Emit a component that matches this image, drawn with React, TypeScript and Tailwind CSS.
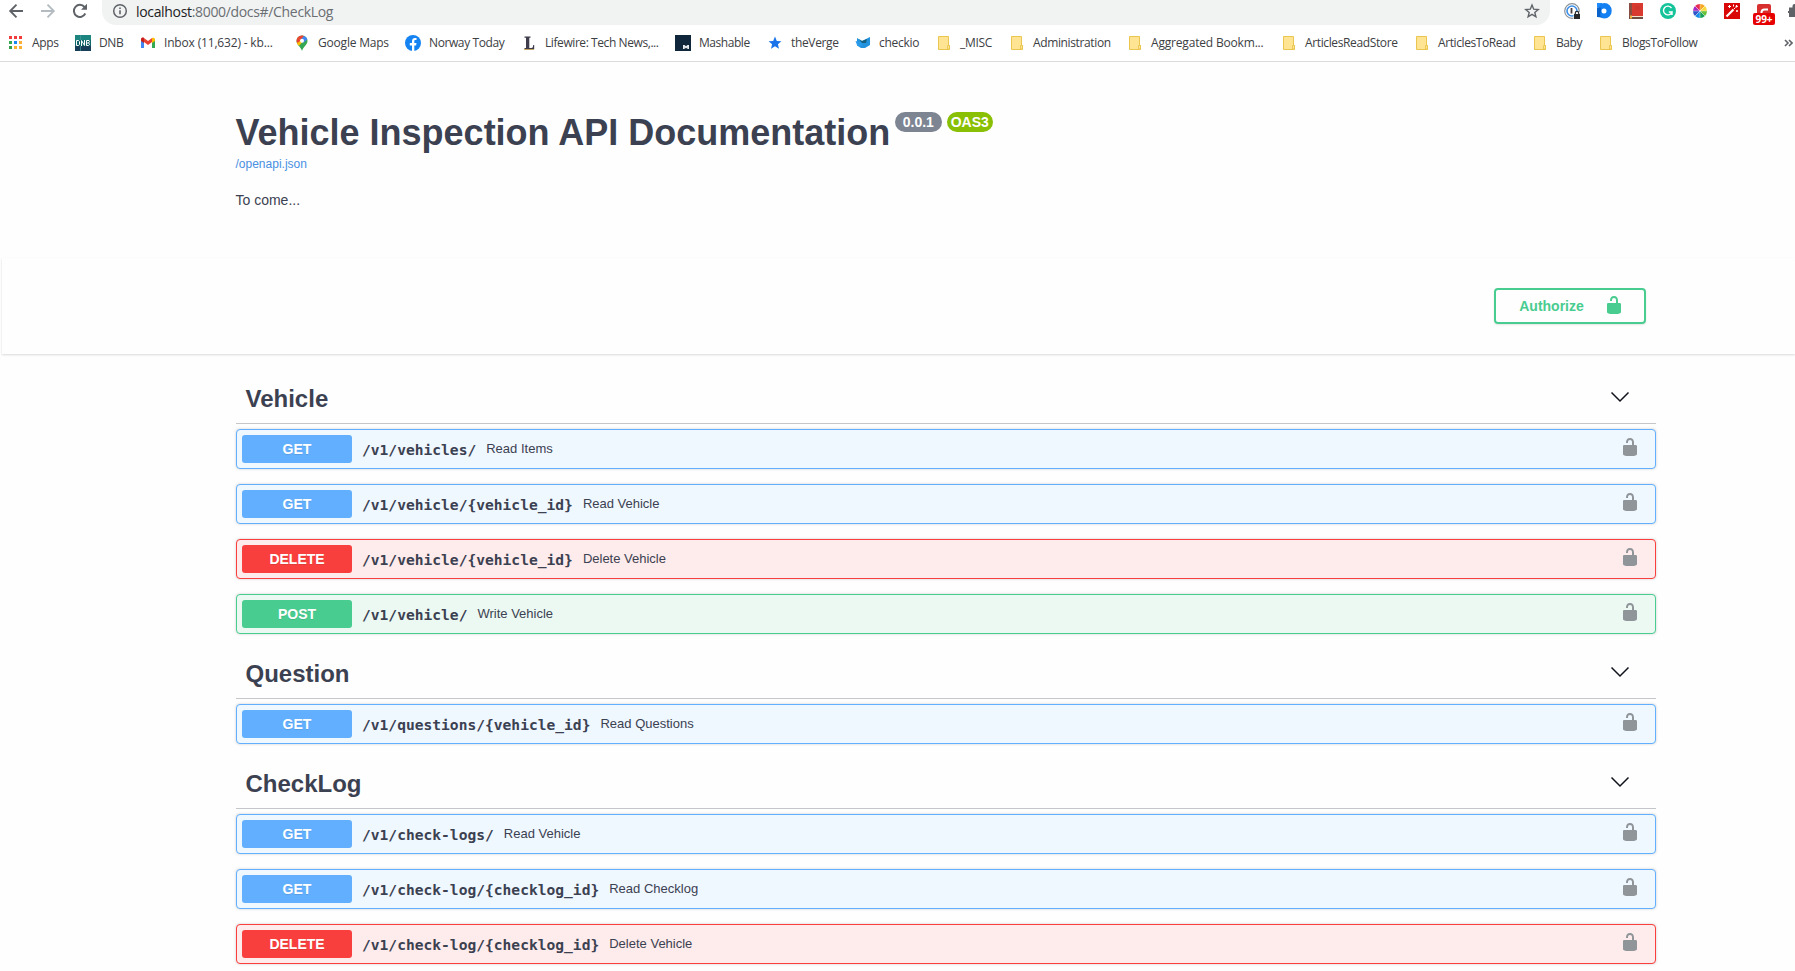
import React from "react";

type Method = "GET" | "DELETE" | "POST";
type Operation = { method: Method; path: string; summary: string };

const styles: Record<Method, { box: string; tag: string }> = {
  GET: { box: "border-[#61affe] bg-[#eff7ff]", tag: "bg-[#61affe]" },
  DELETE: { box: "border-[#f93e3e] bg-[#feebeb]", tag: "bg-[#f93e3e]" },
  POST: { box: "border-[#49cc90] bg-[#ecf9f3]", tag: "bg-[#49cc90]" },
};

const sections: { name: string; ops: Operation[] }[] = [
  {
    name: "Vehicle",
    ops: [
      { method: "GET", path: "/v1/vehicles/", summary: "Read Items" },
      { method: "GET", path: "/v1/vehicle/{vehicle_id}", summary: "Read Vehicle" },
      { method: "DELETE", path: "/v1/vehicle/{vehicle_id}", summary: "Delete Vehicle" },
      { method: "POST", path: "/v1/vehicle/", summary: "Write Vehicle" },
    ],
  },
  {
    name: "Question",
    ops: [{ method: "GET", path: "/v1/questions/{vehicle_id}", summary: "Read Questions" }],
  },
  {
    name: "CheckLog",
    ops: [
      { method: "GET", path: "/v1/check-logs/", summary: "Read Vehicle" },
      { method: "GET", path: "/v1/check-log/{checklog_id}", summary: "Read Checklog" },
      { method: "DELETE", path: "/v1/check-log/{checklog_id}", summary: "Delete Vehicle" },
    ],
  },
];

function Unlock({ className }: { className: string }) {
  return (
    <svg viewBox="0 0 20 20" width="20" height="20" className={className} fill="currentColor">
      <path d="M15.8 8H14V5.6C14 2.703 12.665 1 10 1 7.334 1 6 2.703 6 5.6V6h2v-.801C8 3.754 8.797 3 10 3c1.203 0 2 .754 2 2.199V8H4c-.553 0-1 .646-1 1.199V17c0 .549.428 1.139.951 1.307l1.197.387C5.672 18.861 6.55 19 7.1 19h5.8c.549 0 1.428-.139 1.951-.307l1.196-.387c.524-.167.953-.757.953-1.306V9.199C17 8.646 16.352 8 15.8 8z" />
    </svg>
  );
}

function Chevron() {
  return (
    <svg viewBox="0 0 20 20" width="20" height="20" className="mb-[3px]" fill="none" stroke="#11131c" strokeWidth="1.5">
      <path d="M1.500 5.500 10 14l8.500-8.500" />
    </svg>
  );
}

function AppsIcon() {
  const colors = ["#f23c3c", "#f23c3c", "#f23c3c", "#34a853", "#1a86f3", "#fbb034", "#34a04f", "#fbb034", "#fbb034"];
  return (
    <svg width="16" height="16">
      {colors.map((c, i) => (
        <rect key={i} x={2 + (i % 3) * 5} y={1 + Math.floor(i / 3) * 5} width="3" height="3" fill={c} />
      ))}
    </svg>
  );
}

function DnbIcon() {
  return (
    <svg width="16" height="16">
      <rect width="16" height="16" fill="#14656a" />
      <rect width="16" height="5" fill="#1c8580" />
      <rect y="11" width="16" height="5" fill="#183f57" />
      <path d="M5.500 0v5M5.500 11v5" stroke="#4a9a9c" strokeWidth=".7" />
      <g fill="none" stroke="#fff" strokeWidth="1">
        <path d="M1.500 5.500h2l1 1v3l-1 1h-2zM6.500 11V5.500l3 5V5M11.500 5.500H14l.5 1L13.500 8l1 1v.5l-1 1h-2zM11.500 8h2" />
      </g>
    </svg>
  );
}

function GmailIcon() {
  return (
    <svg width="16" height="16">
      <path d="M1 4v9h3V7z" fill="#4285f4" />
      <path d="M15 4v9h-3V7z" fill="#34a853" />
      <path d="M1 4.500c0-2 2-2.200 3-1.500l4 3 4-3v4l-4 3-4-3-3-2z" fill="#ea4335" />
      <path d="M12 3c1-.7 3-.5 3 1.500V6l-3 2z" fill="#fbbc04" />
      <path d="M1 4.500C1 3 2.500 2 4 3v5L1 6z" fill="#c5221f" />
    </svg>
  );
}

function MapsIcon() {
  return (
    <svg width="16" height="16">
      <path d="M8 .5A5.500 5.500 0 0 0 2.500 6c0 4 4 5 5.500 10 1.500-5 5.500-6 5.500-10A5.500 5.500 0 0 0 8 .5z" fill="#34a853" />
      <path d="M3.800 2.500 8 6l-3.500 4.500C3 8.500 2 5.500 3.800 2.500z" fill="#fbbc04" />
      <path d="M3.700 2.600 6.500 5 10 .9C7 0 5 1 3.700 2.600z" fill="#ea4335" />
      <path d="M10 .9 5 7 3 8C2 5 3 3.500 3.700 2.600L6.200 4.700z" fill="#ea4335" />
      <path d="M10 .9C12 1.700 13 3 13.300 4.500L9 8 6.500 5z" fill="#4285f4" />
      <path d="M3 8c.5 1 1.300 2 2 2.800L9.500 6z" fill="#fbbc04" />
      <circle cx="8" cy="5.800" r="2" fill="#fff" />
    </svg>
  );
}

function FacebookIcon() {
  return (
    <svg width="16" height="16">
      <circle cx="8" cy="8" r="8" fill="#1683f3" />
      <path d="M7 16v-5.500H4.800V8H7V6.200C7 4 8.300 3 10 3l1.500.1v2h-1c-1 0-1.200.5-1.200 1.200V8h2.200l-.4 2.500H9.300V16z" fill="#fff" />
    </svg>
  );
}

function LifewireIcon() {
  return (
    <svg width="16" height="16">
      <path d="M3 14h10v1H3z" fill="#f0c96a" />
      <path d="M3.500 1.500h6v1.200H8.300V13h2.200c1.300 0 1.500-1 1.700-3h1v4.300H3.500V13H5V2.700H3.500z" fill="#3f3d4d" />
    </svg>
  );
}

function MashableIcon() {
  return (
    <svg width="16" height="16">
      <rect width="16" height="16" fill="#10263b" />
      <path d="M8 14v-4h1.500L11 11.300 12.500 10H14v4h-1.700v-1.500l-1.300 1-1.300-1V14z" fill="#e6eaed" />
    </svg>
  );
}

function StarIcon() {
  return (
    <svg width="16" height="16">
      <path d="m8 1.500 1.800 4.400 4.600.3-3.500 3 1.100 4.600L8 11.300l-4 2.500 1.100-4.600-3.500-3 4.600-.3z" fill="#1a73e8" />
    </svg>
  );
}

function CheckioIcon() {
  return (
    <svg width="16" height="16">
      <path d="m2 3 5 3 8-4v8l-5 3H6L2 10.500z" fill="#2292dd" />
      <path d="m4 4 3 2 5-2-1 4H7z" fill="#15607f" />
      <path d="m.5 6 5 1 2 3-3 1.500L2 10z" fill="#2a9bea" />
    </svg>
  );
}

function FolderIcon() {
  return (
    <svg width="16" height="16">
      <path d="M2.500 1.500h10v9h1v4h-11z" fill="#ffe593" stroke="#eac54f" />
      <path d="M11.500 14v-3.500h2V14z" fill="#ffe593" stroke="#eac54f" strokeWidth=".9" />
    </svg>
  );
}

const bookmarks: { label: string; icon: React.ReactNode; box: string; text: string }[] = [
  { label: "Apps", icon: <AppsIcon />, box: "w-[68px]", text: "pl-px tracking-[-0.35px]" },
  { label: "DNB", icon: <DnbIcon />, box: "w-[65px]", text: "tracking-[-0.35px]" },
  { label: "Inbox (11,632) - kb...", icon: <GmailIcon />, box: "w-[154px]", text: "tracking-[-0.17px]" },
  { label: "Google Maps", icon: <MapsIcon />, box: "w-[111px]", text: "tracking-[-0.2px]" },
  { label: "Norway Today", icon: <FacebookIcon />, box: "w-[116px]", text: "tracking-[-0.4px]" },
  { label: "Lifewire: Tech News,...", icon: <LifewireIcon />, box: "w-[154px]", text: "tracking-[-0.42px]" },
  { label: "Mashable", icon: <MashableIcon />, box: "w-[92px]", text: "tracking-[-0.45px]" },
  { label: "theVerge", icon: <StarIcon />, box: "w-[88px]", text: "tracking-[-0.35px]" },
  { label: "checkio", icon: <CheckioIcon />, box: "w-[81px]", text: "tracking-[-0.3px]" },
  { label: "_MISC", icon: <FolderIcon />, box: "w-[73px]", text: "tracking-[-0.3px]" },
  { label: "Administration", icon: <FolderIcon />, box: "w-[118px]", text: "tracking-[-0.37px]" },
  { label: "Aggregated Bookm...", icon: <FolderIcon />, box: "w-[154px]", text: "tracking-[-0.18px]" },
  { label: "ArticlesReadStore", icon: <FolderIcon />, box: "w-[133px]", text: "tracking-[-0.37px]" },
  { label: "ArticlesToRead", icon: <FolderIcon />, box: "w-[118px]", text: "tracking-[-0.4px]" },
  { label: "Baby", icon: <FolderIcon />, box: "w-[66px]", text: "tracking-[-0.4px]" },
  { label: "BlogsToFollow", icon: <FolderIcon />, box: "w-[120px]", text: "tracking-[-0.35px]" },
];

function Extensions() {
  return (
    <div className="ml-[14px] flex h-[26px] shrink-0 items-start gap-4 pt-[3px]">
      <svg width="16" height="16" viewBox="0 0 16 16">
        <circle cx="8" cy="8" r="7.300" fill="#fff" stroke="#8d9299" strokeWidth="1.200" />
        <circle cx="8" cy="8" r="5" fill="none" stroke="#3a8fe8" strokeWidth="1.600" />
        <path d="M7.500 5v5.500" stroke="#4a3c40" strokeWidth="1.800" />
        <path d="M9.500 9H16v7H9.500z" fill="#fff" />
        <path d="M10 11h6v5h-6z" fill="#26282c" />
        <path d="M11.300 11v-1a1.700 1.700 0 0 1 3.400 0v1" fill="none" stroke="#26282c" strokeWidth="1.200" />
      </svg>
      <svg width="16" height="16" viewBox="0 0 16 16">
        <path d="M1 0h5v4.500H1z" fill="#1d8bfb" />
        <path fillRule="evenodd" d="M8.500 0a7 7.500 0 0 1 0 15.500C4.500 15.500 2 12.500 2 8S4.500 0 8.500 0zm-.5 5.500a2.500 2.500 0 1 0 0 5 2.500 2.500 0 0 0 0-5z" fill="#1580f2" />
        <path d="M1 4.500h4V9a4 4 0 0 0 1 5.500L1 14z" fill="#0a63c9" />
      </svg>
      <svg width="16" height="16" viewBox="0 0 16 16">
        <path d="M1 0h14v14H1z" fill="#d83a30" />
        <path d="M1 0h3v14H1z" fill="#8b4c42" />
        <path d="M1 13h14v3H1z" fill="#6f4d43" />
        <path d="M3 13h12v1H3z" fill="#f3e5cf" />
        <path d="M2 12.500h2V16l-1-1-1 1z" fill="#f5b63e" />
        <path d="M7 4h5M7 6h5" stroke="#c4352c" />
      </svg>
      <svg width="16" height="16" viewBox="0 0 16 16">
        <circle cx="8" cy="8" r="8" fill="#15c39a" />
        <path d="M11.500 5A4.400 4.400 0 1 0 12 9H8.800M12 9v3" fill="none" stroke="#fff" strokeWidth="1.400" />
      </svg>
      <svg width="16" height="16" viewBox="0 0 16 16">
        <path d="M8 8V1a7 7 0 0 1 5 2z" fill="#f5a623" />
        <path d="m8 8 5-5a7 7 0 0 1 2 5z" fill="#f7d83d" />
        <path d="M8 8h7a7 7 0 0 1-2 5z" fill="#67c23a" />
        <path d="m8 8 5 5a7 7 0 0 1-5 2z" fill="#18a05a" />
        <path d="M8 8v7a7 7 0 0 1-5-2z" fill="#168ee8" />
        <path d="m8 8-5 5a7 7 0 0 1-2-5z" fill="#2f54c8" />
        <path d="M8 8H1a7 7 0 0 1 2-5z" fill="#a62bc1" />
        <path d="M8 8 3 3a7 7 0 0 1 5-2z" fill="#e82c4e" />
        <path d="M8 1v14M1 8h14M3 3l10 10M13 3 3 13" stroke="#fff" strokeWidth=".4" />
      </svg>
      <svg width="16" height="16" viewBox="0 0 16 16">
        <path d="M0 0h16v16H0z" fill="#d90707" />
        <path d="m2.500 13.500 7-7" stroke="#fff" strokeWidth="2.200" />
        <path d="m10 6 1.500-1.500M5.500 2v3M4 3.500h3M9.500 1.500v2M12.500 2v2.500M11.500 3.300H14M13 7v2M12 8h2" stroke="#fff" strokeWidth="1" />
      </svg>
      <div className="relative h-4 w-4">
        <svg width="16" height="16" viewBox="0 0 16 16">
          <rect x="1" y="1" width="14" height="14" rx="2" fill="#d8302f" />
          <path d="M5.500 12V9.500c0-2 1-3 3-3H12" fill="none" stroke="#fff" strokeWidth="2" />
        </svg>
        <div className="absolute top-[10px] left-[-3px] flex h-3 w-[22px] items-center justify-center rounded-[2px] bg-[#e60000] font-['Open_Sans',sans-serif] text-[10px] leading-none font-bold text-white">
          99+
        </div>
      </div>
      <svg width="16" height="16" viewBox="0 0 16 16">
        <path d="M1 4.500h3.500V3a2 2 0 0 1 4 0v1.500H13V14H1v-4H0V8h1z" fill="#5f6368" />
      </svg>
    </div>
  );
}

function BrowserBar() {
  return (
    <header className="h-[62px] overflow-hidden border-b border-[#d8dadc] bg-white font-['Open_Sans',sans-serif]">
      <div className="flex h-[25px] items-start">
        <div className="flex h-[22px] w-[102px] shrink-0 items-center text-[#5f6368]">
          <svg width="16" height="16" viewBox="0 0 16 16" className="ml-2" fill="none" stroke="currentColor" strokeWidth="1.900">
            <path d="M15 8H2.500M8.500 1.700 2.200 8l6.300 6.300" />
          </svg>
          <svg width="16" height="16" viewBox="0 0 16 16" className="ml-4 text-[#b4bcc2]" fill="none" stroke="currentColor" strokeWidth="1.900">
            <path d="M1 8h12.500M7.500 1.700 13.800 8l-6.300 6.300" />
          </svg>
          <svg width="16" height="16" viewBox="0 0 16 16" className="ml-4" fill="none" stroke="currentColor" strokeWidth="2">
            <path d="M13.300 10.500A6 6 0 1 1 12.500 4L14 5.500" />
            <path d="M15 .8v6H9z" fill="currentColor" stroke="none" />
          </svg>
        </div>
        <div className="flex h-[25px] w-[1448px] shrink-0 items-start rounded-b-[14px] bg-[#f1f3f2]">
          <svg width="16" height="16" viewBox="0 0 16 16" className="mt-[3px] ml-[10px]" fill="none" stroke="#5f6368" strokeWidth="1.500">
            <circle cx="8" cy="8" r="6.300" />
            <path d="M8 7.200v4M8 4.500v1.600" strokeWidth="1.600" />
          </svg>
          <div className="ml-[8px] h-[22px] grow text-[14px] leading-[23px] tracking-[-0.33px] text-[#6a6e73]">
            <span className="text-[#202124]">localhost</span>:8000/docs#/CheckLog
          </div>
          <svg width="16" height="16" viewBox="0 0 16 16" className="mt-[3px] mr-[10px]" fill="none" stroke="#5f6368" strokeWidth="1.400">
            <path d="m8 2 1.700 4.200 4.500.3-3.400 2.900 1.100 4.400L8 11.400l-3.900 2.400 1.100-4.400-3.400-2.900 4.500-.3z" />
          </svg>
        </div>
        <Extensions />
      </div>
      <nav className="flex h-9 items-center pl-[7px]">
        {bookmarks.map((b) => (
          <div key={b.label} className={`flex shrink-0 items-center gap-2 ${b.box}`}>
            <span className="block h-4 w-4 shrink-0">{b.icon}</span>
            <span className={`text-[12px] leading-4 whitespace-nowrap text-[#3c4043] ${b.text}`}>{b.label}</span>
          </div>
        ))}
        <svg width="9" height="8" viewBox="0 0 9 8" className="ml-[66px] shrink-0" fill="none" stroke="#5f6368" strokeWidth="1.600">
          <path d="m1 1 3 3-3 3M5 1l3 3-3 3" />
        </svg>
      </nav>
    </header>
  );
}

function Row({ op }: { op: Operation }) {
  const s = styles[op.method];
  return (
    <div className={`mb-[15px] flex h-10 items-center rounded-[4px] border p-[5px] shadow-[0_0_3px_rgba(0,0,0,0.19)] ${s.box}`}>
      <div className={`h-7 w-[110px] shrink-0 rounded-[3px] text-center text-[14px] leading-[28px] font-bold text-white [text-shadow:0_1px_0_rgba(0,0,0,0.1)] ${s.tag}`}>
        {op.method}
      </div>
      <div className="ml-[10px] pt-[2px] font-['DejaVu_Sans_Mono',monospace] text-[14.6px] leading-5 font-bold text-[#3b4151]">{op.path}</div>
      <div className="ml-[10px] grow text-[13px] leading-5 text-[#3b4151]">{op.summary}</div>
      <Unlock className="mr-[10px] mb-[4px] text-[#909599]" />
    </div>
  );
}

export default function App() {
  return (
    <div className="h-[971px] w-[1795px] overflow-hidden bg-[#fefefe] font-['Liberation_Sans',Arial,sans-serif] text-[#3b4151]">
      <BrowserBar />
      <div className="ml-[235.5px] h-[196px] w-[1420px] pt-[50px]">
        <div className="flex h-10 items-start">
          <h1 className="text-[36px] leading-[41px] font-bold whitespace-nowrap">Vehicle Inspection API Documentation</h1>
          <span className="ml-[4.5px] h-5 w-[47px] rounded-full bg-[#7d8492] text-center text-[14px] leading-5 font-bold text-white">0.0.1</span>
          <span className="ml-[5px] h-5 w-[46px] rounded-full bg-[#89bf04] text-center text-[14px] leading-5 font-bold text-white">OAS3</span>
        </div>
        <div className="mt-[4px] text-[12px] leading-4 text-[#4990e2]">/openapi.json</div>
        <p className="mt-[18px] text-[14px] leading-5">To come...</p>
      </div>
      <div className="ml-[2px] h-[96px] bg-[#fefefe] pt-[30px] shadow-[0_1px_2px_0_rgba(0,0,0,0.15)]">
        <div className="flex w-[1654px] justify-end pr-[10px]">
          <button className="flex h-9 w-[152px] items-center rounded-[4px] border-2 border-[#49cc90] pl-[23px] text-[14px] font-bold text-[#49cc90] shadow-[0_1px_2px_rgba(0,0,0,0.1)]">
            <span className="w-[65px]">Authorize</span>
            <Unlock className="mb-[2px] ml-[20px]" />
          </button>
        </div>
      </div>
      <main className="ml-[236px] w-[1420px] pt-5">
        {sections.map((section) => (
          <section key={section.name}>
            <div className="mb-[5px] flex h-[50px] items-center border-b border-[#c4c6ca] pr-[26px] pl-[9.5px]">
              <h2 className="grow text-[24px] leading-[28px] font-bold">{section.name}</h2>
              <Chevron />
            </div>
            {section.ops.map((op) => (
              <Row key={op.method + op.path} op={op} />
            ))}
          </section>
        ))}
      </main>
    </div>
  );
}
